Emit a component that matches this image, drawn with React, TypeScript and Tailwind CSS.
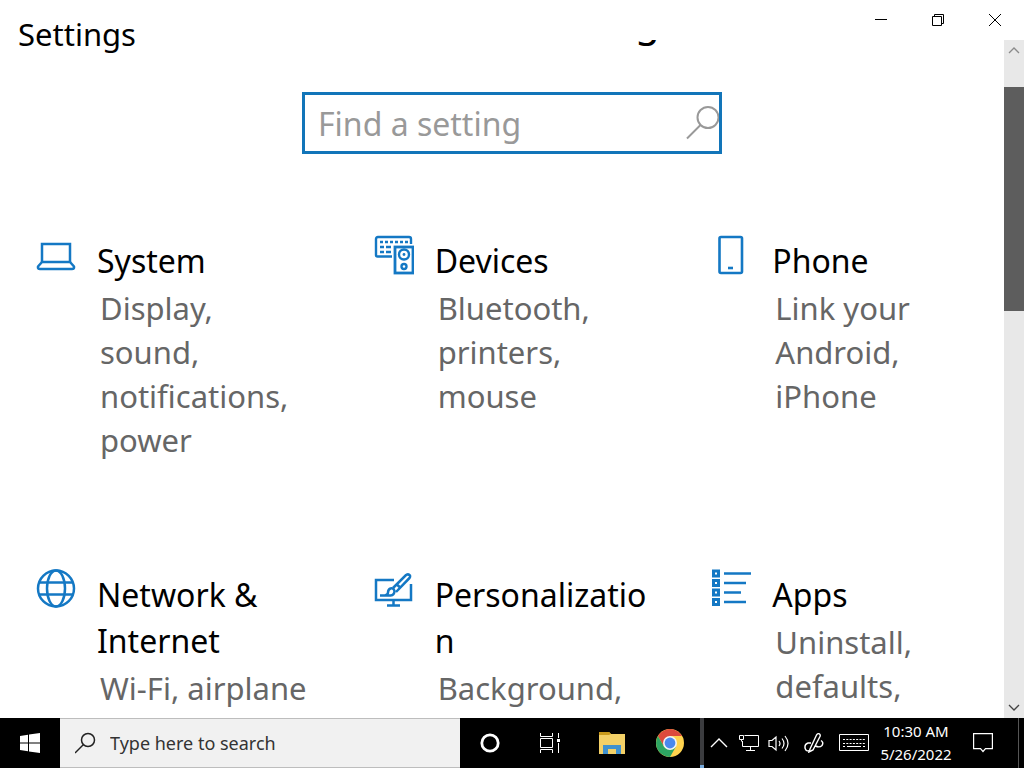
import type { ReactNode } from "react";

const LaptopIcon = () => (
  <svg viewBox="0 0 40 40" className="size-10" fill="none" stroke="#1478c4" strokeWidth="2.5">
    <path d="M6 27V9h28v18" />
    <path d="M6 27h28l4 4.5q.5 2.5-2 2.5H4q-2.5 0-2-2.5z" strokeLinejoin="round" />
  </svg>
);

const DevicesIcon = () => (
  <svg viewBox="0 0 40 40" className="size-10" fill="none" stroke="#1478c4" strokeWidth="2.4">
    <path d="M18 21.5H3.5Q2 21.5 2 20V4q0-2 2-2h31q2 0 2 2v5" />
    <path d="M6 7h29" strokeDasharray="3 2" />
    <path d="M6 12h4m2 0h5M6 17h4m2 0h5" />
    <rect x="21" y="12" width="18" height="26" strokeWidth="2.8" />
    <circle cx="30" cy="19.5" r="5" />
    <circle cx="30" cy="19.5" r="1.4" fill="#1478c4" stroke="none" />
    <circle cx="30" cy="31.5" r="2.5" />
  </svg>
);

const PhoneIcon = () => (
  <svg viewBox="0 0 40 40" className="size-10" fill="none" stroke="#1478c4" strokeWidth="2.6">
    <rect x="8.5" y="2" width="22.5" height="36" rx="1.5" />
    <path d="M17 33h5" />
  </svg>
);

const GlobeIcon = () => (
  <svg viewBox="0 0 40 40" className="size-10" fill="none" stroke="#1478c4" strokeWidth="2.5">
    <circle cx="20" cy="19.5" r="18" />
    <ellipse cx="20" cy="19.5" rx="9" ry="18" />
    <path d="M3 13.5h34M3 25.5h34" />
  </svg>
);

const BrushIcon = () => (
  <svg viewBox="0 0 40 40" className="size-10" fill="none" stroke="#1478c4" strokeWidth="2.5">
    <path d="M20 11H2v20h35V15M19.5 31v5M13 36.5h13" />
    <path d="M6 26.5h10.5q4-.5 4-4.5-1-3.5-4-2.5-2.5 1-2.5 4 0 2-3 3" />
    <path d="M19 19l13-13q2.500-1.500 4 .5 .5 1.500-.5 2.500L22 23M23 15.500l3.500 3.500" />
  </svg>
);

const AppsIcon = () => (
  <svg viewBox="0 0 40 40" className="size-10" fill="none" stroke="#1478c4" strokeWidth="2.6">
    <path d="M2.500 2h5v5h-5zM2.500 11.500h5v5h-5zM2.500 21h5v5h-5zM2.500 30.500h5v5h-5z" strokeWidth="3" />
    <path d="M13 4.500h27M13 14h22M13 23.500h17M13 33h22" />
  </svg>
);

type Category = { title: string; description: string; icon: ReactNode };

const categories: Category[] = [
  { title: "System", description: "Display, sound, notifications, power", icon: <LaptopIcon /> },
  { title: "Devices", description: "Bluetooth, printers, mouse", icon: <DevicesIcon /> },
  { title: "Phone", description: "Link your Android, iPhone", icon: <PhoneIcon /> },
  { title: "Network & Internet", description: "Wi-Fi, airplane mode, VPN", icon: <GlobeIcon /> },
  { title: "Personalization", description: "Background, lock screen, colors", icon: <BrushIcon /> },
  { title: "Apps", description: "Uninstall, defaults, optional features", icon: <AppsIcon /> },
];

function CategoryTile({ title, description, icon }: Category) {
  return (
    <a href="#" className="flex min-h-[334px] items-start gap-[21px]">
      <span className="shrink-0">{icon}</span>
      <span className="min-w-0 flex-1 pt-[3px]">
        <span className="block text-[32px] leading-[46px] wrap-anywhere text-black">{title}</span>
        <span className="block pt-0.5 pr-1 pl-[3px] text-[31px] leading-[44px] text-[#666666]">{description}</span>
      </span>
    </a>
  );
}

function TitleBar() {
  return (
    <header className="flex h-10 shrink-0 items-start justify-between pr-px pl-[18px]">
      <span className="pt-[11px] text-[31px] leading-[46px]">Settings</span>
      <div className="flex">
        <button aria-label="Minimize" className="grid h-10 w-[57px] place-items-center">
          <svg viewBox="0 0 14 14" className="size-3.5" stroke="#000">
            <path d="M1 6.500h12" />
          </svg>
        </button>
        <button aria-label="Restore" className="grid h-10 w-[57px] place-items-center">
          <svg viewBox="0 0 14 14" className="size-3.5" fill="none" stroke="#000">
            <path d="M1.500 3.500h9v9h-9zM3.500 3.500v-2h9v9h-2" />
          </svg>
        </button>
        <button aria-label="Close" className="grid h-10 w-[57px] place-items-center">
          <svg viewBox="0 0 14 14" className="size-3.5" stroke="#000">
            <path d="M1 1l12 12M13 1L1 13" />
          </svg>
        </button>
      </div>
    </header>
  );
}

function ScrollBar() {
  return (
    <div className="flex w-5 shrink-0 flex-col bg-[#e8e8e8]">
      <button aria-label="Scroll up" className="grid h-5 place-items-center">
        <svg viewBox="0 0 12 8" className="h-2 w-3" fill="none" stroke="#8a8a8a" strokeWidth="1.3">
          <path d="M1 7l5-5 5 5" />
        </svg>
      </button>
      <div className="flex-1 pt-[27px]">
        <div className="h-56 bg-[#5d5d5d]" />
      </div>
      <button aria-label="Scroll down" className="grid h-5 place-items-center">
        <svg viewBox="0 0 12 8" className="h-2 w-3" fill="none" stroke="#444" strokeWidth="1.3">
          <path d="M1 1l5 5 5-5" />
        </svg>
      </button>
    </div>
  );
}

function Taskbar() {
  return (
    <footer className="flex h-[50px] shrink-0 items-stretch bg-black text-white">
      <button aria-label="Start" className="grid w-[60px] place-items-center">
        <svg viewBox="0 0 20 20" className="size-5" fill="#fff">
          <path d="M0 3l8-1.200V9.500H0zM9 1.600L20 0v9.500H9zM0 10.500h8v7.700L0 17zM9 10.500h11V20L9 18.400z" />
        </svg>
      </button>
      <label className="flex w-[400px] items-center gap-[13px] border-y border-[#bdbdbd] bg-[#f1f1f1] pl-[15px]">
        <svg viewBox="0 0 22 22" className="size-[22px] shrink-0" fill="none" stroke="#222" strokeWidth="1.5">
          <circle cx="13" cy="8" r="6.5" />
          <path d="M8.500 12.500L0 21" />
        </svg>
        <input
          aria-label="Type here to search"
          placeholder="Type here to search"
          className="min-w-0 flex-1 text-[18px] text-black outline-none placeholder:text-[#333333]"
        />
      </label>
      <button aria-label="Cortana" className="grid w-[60px] place-items-center">
        <svg viewBox="0 0 20 20" className="size-5" fill="none" stroke="#fff" strokeWidth="2.8">
          <circle cx="10" cy="10" r="8.2" />
        </svg>
      </button>
      <button aria-label="Task View" className="grid w-[60px] place-items-center">
        <svg viewBox="0 0 22 20" className="h-5 w-[22px]" fill="none" stroke="#fff">
          <path d="M1.500 0v3.500h12V0M1.500 5.500h12v9h-12zM1.500 20v-3.500h12V20M19.500 0v5M19.500 10v10" />
          <path d="M18 6h3v3h-3z" fill="#fff" stroke="none" />
        </svg>
      </button>
      <button aria-label="File Explorer" className="grid w-[64px] place-items-center">
        <svg viewBox="0 0 26 22" className="h-[22px] w-[26px]">
          <path d="M0 0h10l2 2h14v20H0z" fill="#f3d067" />
          <path d="M0 0h10l2 2-2 1H0z" fill="#c99a1c" />
          <path d="M4 22v-9h18v9h-5v-5H9v5z" fill="#3f91cf" />
        </svg>
      </button>
      <button aria-label="Google Chrome" className="grid w-[52px] place-items-center">
        <svg viewBox="0 0 28 28" className="size-7">
          <circle cx="14" cy="14" r="14" fill="#ffd34e" />
          <path d="M1.900 7A14 14 0 0 1 26.100 7H14L8 17.500z" fill="#dc4a3d" />
          <path d="M1.900 7A14 14 0 0 0 14 28l6-10.500L8 17.500z" fill="#2da562" />
          <circle cx="14" cy="14" r="7" fill="#f4f4f4" />
          <circle cx="14" cy="14" r="5.4" fill="#4a88ee" />
        </svg>
      </button>
      <div className="ml-auto flex items-center">
        <div className="flex w-1 flex-col self-stretch bg-[#3b3c3f]">
          <div className="mt-auto h-[3px] bg-[#76a9dc]" />
        </div>
        <button aria-label="Show hidden icons" className="grid w-[30px] place-items-center">
          <svg viewBox="0 0 18 10" className="h-2.5 w-[18px]" fill="none" stroke="#fff" strokeWidth="1.4">
            <path d="M1 9l8-8 8 8" />
          </svg>
        </button>
        <button aria-label="Network" className="grid w-[30px] place-items-center">
          <svg viewBox="0 0 20 18" className="h-[18px] w-5" fill="none" stroke="#fff">
            <path d="M5.500 1.500h14v11h-16V7M11.500 12.500v4M7 16.500h9M.5 1.500h4v4h-4zM2.500 5.500v2" />
          </svg>
        </button>
        <button aria-label="Volume" className="grid w-[30px] place-items-center">
          <svg viewBox="0 0 22 18" className="h-[18px] w-[22px]" fill="none" stroke="#fff" strokeWidth="1.2">
            <path d="M1 6.500h3L8 3v13l-4-3.500H1zM11 7q2 2.500 0 5M14 4.500q4 5 0 10M17 2q6 7.500 0 15" />
          </svg>
        </button>
        <button aria-label="Pen workspace" className="grid w-10 place-items-center">
          <svg viewBox="0 0 20 20" className="size-5" fill="none" stroke="#fff" strokeWidth="1.4">
            <path d="M6 16L12.500 2q2-2.500 3.500-.5 .5 1 0 2L9 17l-4 2zM7 10H4q-3.500 1-3 5 1 4 5 2.500M11.500 13q4 2 6.500-.5 2-3-1-5" />
          </svg>
        </button>
        <button aria-label="Touch keyboard" className="grid w-10 place-items-center">
          <svg viewBox="0 0 30 18" className="h-[18px] w-[30px]" fill="none" stroke="#fff">
            <path d="M.5.5h29v16H.5z" />
            <path d="M4 5.500h22M4 9.500h22" strokeDasharray="2 1.300" />
            <path d="M4 12.500h2M8 12.500h14M24 12.500h2" />
          </svg>
        </button>
        <div className="w-[84px] text-center text-[15px] leading-[23px]">
          <div>10:30 AM</div>
          <div>5/26/2022</div>
        </div>
        <button aria-label="Notifications" className="grid w-[50px] place-items-center">
          <svg viewBox="0 0 20 20" className="size-5" fill="none" stroke="#fff" strokeWidth="1.2">
            <path d="M.6.600h18.800v15H12.500L10 18.500 7.500 15.600H.6z" />
          </svg>
        </button>
        <div className="mr-[5px] ml-2.5 w-px self-stretch bg-[#555555]" />
      </div>
    </footer>
  );
}

export default function App() {
  return (
    <div className="flex h-screen flex-col overflow-hidden bg-white font-['Noto_Sans','Open_Sans',sans-serif] text-black">
      <TitleBar />
      <div className="flex min-h-0 flex-1">
        <main className="min-w-0 flex-1 overflow-hidden">
          <div className="flex flex-col items-center pl-5">
            <h1 className="-mt-[50px] text-[40px] leading-[62px] font-normal">Windows Settings</h1>
            <label className="mt-10 flex h-[62px] w-[420px] items-center border-3 border-[#1275b9] pl-[13px]">
              <input
                aria-label="Find a setting"
                placeholder="Find a setting"
                className="min-w-0 flex-1 pt-0.5 text-[32px] leading-[46px] outline-none placeholder:text-[#999999]"
              />
              <svg viewBox="0 0 34 34" className="size-[34px] shrink-0" fill="none" stroke="#999" strokeWidth="2">
                <circle cx="23" cy="11.5" r="10.5" />
                <path d="M15.500 19L2 32.500" />
              </svg>
            </label>
          </div>
          <div className="mt-[81px] grid grid-cols-3 gap-x-[59px] pr-3.5 pl-9">
            {categories.map((c) => (
              <CategoryTile key={c.title} {...c} />
            ))}
          </div>
        </main>
        <ScrollBar />
      </div>
      <Taskbar />
    </div>
  );
}
